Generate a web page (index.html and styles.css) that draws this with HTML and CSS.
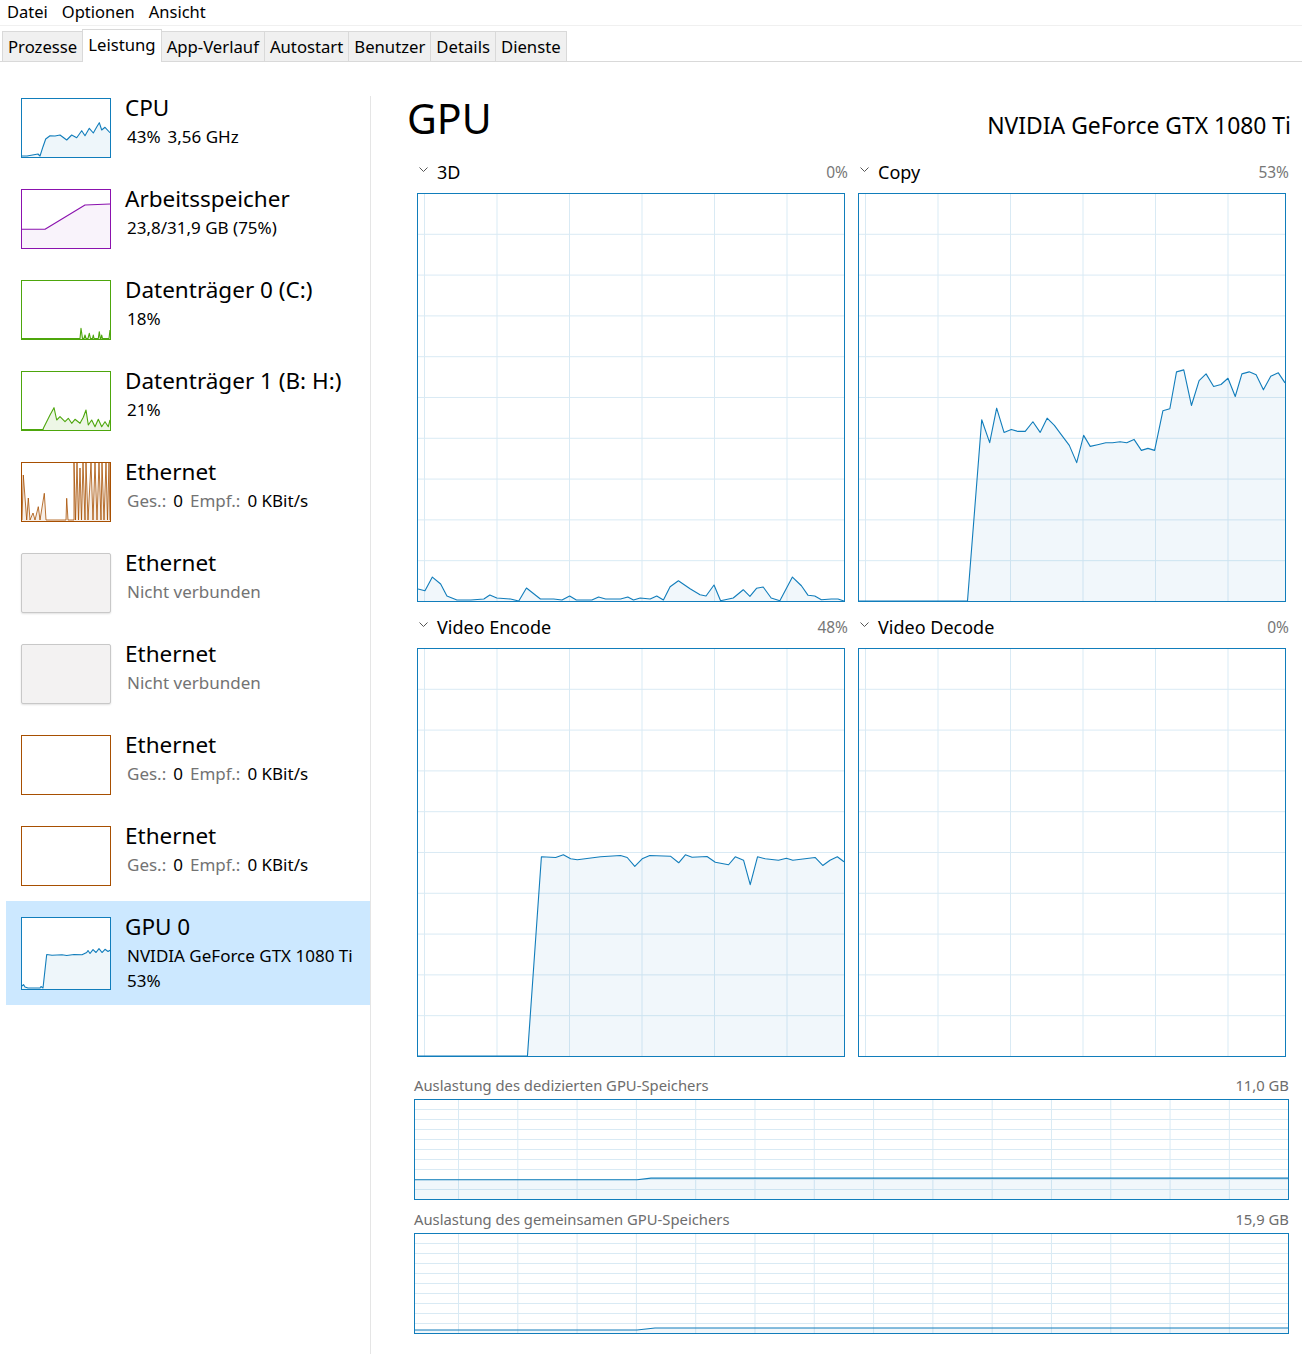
FILE: index.html
```html
<!DOCTYPE html>
<html lang="de">
<head>
    <meta charset="UTF-8">
    <meta name="viewport" content="width=device-width, initial-scale=1.0">
    <link rel="stylesheet" href="styles.css">
    <title>Task-Manager</title>
</head>
<body>

    <div class="menubar">
        <span>Datei</span>
        <span>Optionen</span>
        <span>Ansicht</span>
    </div>

    <div class="tabs">
        <div class="tab">Prozesse</div>
        <div class="tab active">Leistung</div>
        <div class="tab">App-Verlauf</div>
        <div class="tab">Autostart</div>
        <div class="tab">Benutzer</div>
        <div class="tab">Details</div>
        <div class="tab">Dienste</div>
    </div>

    <div class="main">
        <div class="sidebar">
            <div class="list">

                <div class="item">
                    <div class="thumb cpu">
                        <svg viewBox="0 0 88 58" preserveAspectRatio="none">
                            <polygon class="fill" points="0,57 5,57 16,55 18,57 21,47.7 23.7,40 28,36.7 33,37 38,36 44.7,41 49.7,36 54.7,38.7 59.7,31.7 63,36.7 67.3,29.3 71.3,34 74.7,28 77.3,23.7 79.7,31 83,28.3 88,33.7 88,58 0,58"/>
                            <polyline class="line" points="0,57 5,57 16,55 18,57 21,47.7 23.7,40 28,36.7 33,37 38,36 44.7,41 49.7,36 54.7,38.7 59.7,31.7 63,36.7 67.3,29.3 71.3,34 74.7,28 77.3,23.7 79.7,31 83,28.3 88,33.7"/>
                        </svg>
                    </div>
                    <div class="info">
                        <div class="name">CPU</div>
                        <div class="sub"><span>43%</span><span>3,56 GHz</span></div>
                    </div>
                </div>

                <div class="item">
                    <div class="thumb mem-t">
                        <svg viewBox="0 0 88 58" preserveAspectRatio="none">
                            <polygon class="fill" points="0,39.3 23,39.3 63,15 88,14 88,58 0,58"/>
                            <polyline class="line" points="0,39.3 23,39.3 63,15 88,14"/>
                        </svg>
                    </div>
                    <div class="info">
                        <div class="name">Arbeitsspeicher</div>
                        <div class="sub"><span>23,8/31,9 GB (75%)</span></div>
                    </div>
                </div>

                <div class="item">
                    <div class="thumb disk">
                        <svg viewBox="0 0 88 58" preserveAspectRatio="none">
                            <polygon class="fill" points="0,57.5 58,57.5 59,47.3 60.5,57.5 62,57.5 63,54 64,57.5 66,57.5 67.3,52.3 68.5,57.5 70.5,57.5 71.3,54 72,57.5 76.3,57.5 77.3,50.7 78.3,57.5 79,57.5 79.7,54 80.5,57.5 87,57.5 88,49 88,58 0,58"/>
                            <polyline class="line" points="0,57.5 58,57.5 59,47.3 60.5,57.5 62,57.5 63,54 64,57.5 66,57.5 67.3,52.3 68.5,57.5 70.5,57.5 71.3,54 72,57.5 76.3,57.5 77.3,50.7 78.3,57.5 79,57.5 79.7,54 80.5,57.5 87,57.5 88,49"/>
                        </svg>
                    </div>
                    <div class="info">
                        <div class="name">Datenträger 0 (C:)</div>
                        <div class="sub"><span>18%</span></div>
                    </div>
                </div>

                <div class="item">
                    <div class="thumb disk">
                        <svg viewBox="0 0 88 58" preserveAspectRatio="none">
                            <polygon class="fill" points="0,57.5 21,57.5 21.5,56 28,43 32,35.7 34.7,48 38,44.7 43,49.7 46.3,46.3 49.7,51.3 53,47.3 58,51.3 61.3,45.3 64,38 66.3,53 69.7,48 73,54.7 76.3,47.3 79.7,54.7 83,49.7 86.3,54.7 88,48 88,58 0,58"/>
                            <polyline class="line" points="0,57.5 21,57.5 21.5,56 28,43 32,35.7 34.7,48 38,44.7 43,49.7 46.3,46.3 49.7,51.3 53,47.3 58,51.3 61.3,45.3 64,38 66.3,53 69.7,48 73,54.7 76.3,47.3 79.7,54.7 83,49.7 86.3,54.7 88,48"/>
                        </svg>
                    </div>
                    <div class="info">
                        <div class="name">Datenträger 1 (B: H:)</div>
                        <div class="sub"><span>21%</span></div>
                    </div>
                </div>

                <div class="item">
                    <div class="thumb eth">
                        <svg viewBox="0 0 88 58" preserveAspectRatio="none">
                            <polygon class="fill" points="0,57 1.3,12 4.7,57 6.3,35 8,57 11,50 13,57 16.3,43.7 18,57 22.3,30.3 24,57 44,57 44.7,35.3 46,57 52,57 52,0 53.5,57 55,0 56.5,57 58,5 59.5,57 61,0 63,57 64,0 66,57 69,0 71,57 73,0 75,57 77,0 79,57 80,0 82,57 84,0 85.5,57 87,0 88,57 88,58 0,58"/>
                            <polyline class="line thin" points="0,57 1.3,12 4.7,57 6.3,35 8,57 11,50 13,57 16.3,43.7 18,57 22.3,30.3 24,57 44,57 44.7,35.3 46,57 52,57 52,0 53.5,57 55,0 56.5,57 58,5 59.5,57 61,0 63,57 64,0 66,57 69,0 71,57 73,0 75,57 77,0 79,57 80,0 82,57 84,0 85.5,57 87,0 88,57"/>
                        </svg>
                    </div>
                    <div class="info">
                        <div class="name">Ethernet</div>
                        <div class="sub"><span class="key">Ges.:</span><span>0</span><span class="key">Empf.:</span><span>0 KBit/s</span></div>
                    </div>
                </div>

                <div class="item">
                    <div class="thumb off"></div>
                    <div class="info">
                        <div class="name">Ethernet</div>
                        <div class="sub"><span class="key">Nicht verbunden</span></div>
                    </div>
                </div>

                <div class="item">
                    <div class="thumb off"></div>
                    <div class="info">
                        <div class="name">Ethernet</div>
                        <div class="sub"><span class="key">Nicht verbunden</span></div>
                    </div>
                </div>

                <div class="item">
                    <div class="thumb eth"></div>
                    <div class="info">
                        <div class="name">Ethernet</div>
                        <div class="sub"><span class="key">Ges.:</span><span>0</span><span class="key">Empf.:</span><span>0 KBit/s</span></div>
                    </div>
                </div>

                <div class="item">
                    <div class="thumb eth"></div>
                    <div class="info">
                        <div class="name">Ethernet</div>
                        <div class="sub"><span class="key">Ges.:</span><span>0</span><span class="key">Empf.:</span><span>0 KBit/s</span></div>
                    </div>
                </div>

                <div class="item selected">
                    <div class="thumb cpu tall">
                        <svg viewBox="0 0 88 72" preserveAspectRatio="none">
                            <polygon class="fill" points="0,69 1.5,67.5 3,70 6,71 18,71 19,69.5 21,71 24.7,37 30,37.7 40,37.3 44.7,38 52,37 60,37.3 64.7,35 66,33 68,36 71,32 74,35 77,31 80,35 83,31.7 86,34 88,32.7 88,72 0,72"/>
                            <polyline class="line" points="0,69 1.5,67.5 3,70 6,71 18,71 19,69.5 21,71 24.7,37 30,37.7 40,37.3 44.7,38 52,37 60,37.3 64.7,35 66,33 68,36 71,32 74,35 77,31 80,35 83,31.7 86,34 88,32.7"/>
                        </svg>
                    </div>
                    <div class="info">
                        <div class="name">GPU 0</div>
                        <div class="sub"><span>NVIDIA GeForce GTX 1080 Ti</span></div>
                        <div class="sub"><span>53%</span></div>
                    </div>
                </div>

            </div>
        </div>

        <div class="panel">
            <div class="head">
                <h1>GPU</h1>
                <div class="model">NVIDIA GeForce GTX 1080 Ti</div>
            </div>

            <div class="engines">
                <div class="engine">
                    <div class="eng-label">
                        <svg class="chev" viewBox="0 0 9 5"><path d="M0.5 0.5 L4.5 4.5 L8.5 0.5"/></svg>
                        <span>3D</span>
                        <span class="pct">0%</span>
                    </div>
                    <div class="chart">
                        <svg viewBox="0 0 427 408" preserveAspectRatio="none">
                            <polygon class="fill" points="0,396 7,397.7 14.4,384 22.7,391 29,403 39,407 53,407 66,406 72,402 79,405 92.7,406 101,408 108.7,395 122.7,406 136,406 144.3,407 152,403 158.7,407 174.3,407 181,404 188,406 203,406 210.3,404 216,407 222.7,405 232.7,406 239.3,403 246,407 252.7,393.7 261,387.7 272.7,395.7 282.7,401.7 288.7,403 296.7,392 303.3,407.7 316,405 326,396.7 332.7,403.3 339.3,395.3 346,394 354,405 362.7,407.7 375.3,384 384.3,392.7 391,402.3 397.7,403 404.3,406.7 414.3,406 421,406 427,408 0,408"/>
                            <polyline class="line" points="0,396 7,397.7 14.4,384 22.7,391 29,403 39,407 53,407 66,406 72,402 79,405 92.7,406 101,408 108.7,395 122.7,406 136,406 144.3,407 152,403 158.7,407 174.3,407 181,404 188,406 203,406 210.3,404 216,407 222.7,405 232.7,406 239.3,403 246,407 252.7,393.7 261,387.7 272.7,395.7 282.7,401.7 288.7,403 296.7,392 303.3,407.7 316,405 326,396.7 332.7,403.3 339.3,395.3 346,394 354,405 362.7,407.7 375.3,384 384.3,392.7 391,402.3 397.7,403 404.3,406.7 414.3,406 421,406 427,408"/>
                        </svg>
                    </div>
                </div>

                <div class="engine">
                    <div class="eng-label">
                        <svg class="chev" viewBox="0 0 9 5"><path d="M0.5 0.5 L4.5 4.5 L8.5 0.5"/></svg>
                        <span>Copy</span>
                        <span class="pct">53%</span>
                    </div>
                    <div class="chart">
                        <svg viewBox="0 0 428 408" preserveAspectRatio="none">
                            <polygon class="fill" points="0,408 109,408 123.3,226.3 131.3,249.3 138.3,214.7 145.7,239 153,236 159.7,238 167,238 174.7,228.3 182,239 189,224.7 196.3,232 203,241 211.3,252 218.7,269.3 225.7,242 232.3,253 239.7,251.3 248,249.3 254.7,249.3 262.3,248.3 269,249.3 276.3,246 283.7,257 290.3,255 297,257 305.3,217.3 312.3,215.3 319,178.3 326.3,176.3 334,212 341.7,187 348.7,180.3 356.3,193 363.7,191 370.7,184.7 378,203 384.7,180.3 392,178.3 399,181.3 406.3,196.3 413.7,182.7 421.3,179.3 428,189.3 428,408"/>
                            <polyline class="line" points="0,408 109,408 123.3,226.3 131.3,249.3 138.3,214.7 145.7,239 153,236 159.7,238 167,238 174.7,228.3 182,239 189,224.7 196.3,232 203,241 211.3,252 218.7,269.3 225.7,242 232.3,253 239.7,251.3 248,249.3 254.7,249.3 262.3,248.3 269,249.3 276.3,246 283.7,257 290.3,255 297,257 305.3,217.3 312.3,215.3 319,178.3 326.3,176.3 334,212 341.7,187 348.7,180.3 356.3,193 363.7,191 370.7,184.7 378,203 384.7,180.3 392,178.3 399,181.3 406.3,196.3 413.7,182.7 421.3,179.3 428,189.3"/>
                        </svg>
                    </div>
                </div>

                <div class="engine">
                    <div class="eng-label">
                        <svg class="chev" viewBox="0 0 9 5"><path d="M0.5 0.5 L4.5 4.5 L8.5 0.5"/></svg>
                        <span>Video Encode</span>
                        <span class="pct">48%</span>
                    </div>
                    <div class="chart">
                        <svg viewBox="0 0 427 408" preserveAspectRatio="none">
                            <polygon class="fill" points="0,408 109.7,408 123.7,208.3 138,209 145.7,206.3 153,210.3 159.7,211.3 183,208.3 203,207 209.7,209 217.3,218 224.7,210.3 232.3,207 253,207.7 261.3,214.3 268,206.3 274.7,208.7 289.7,208 298,213.7 311.3,216.3 318,208.3 326.3,211.7 333,236.3 340.3,208.3 348,210.3 361.3,211.7 369.3,209.7 375.7,211.7 398,209 405.7,217 413,211.7 420.3,208.3 427,213.3 427,408"/>
                            <polyline class="line" points="0,408 109.7,408 123.7,208.3 138,209 145.7,206.3 153,210.3 159.7,211.3 183,208.3 203,207 209.7,209 217.3,218 224.7,210.3 232.3,207 253,207.7 261.3,214.3 268,206.3 274.7,208.7 289.7,208 298,213.7 311.3,216.3 318,208.3 326.3,211.7 333,236.3 340.3,208.3 348,210.3 361.3,211.7 369.3,209.7 375.7,211.7 398,209 405.7,217 413,211.7 420.3,208.3 427,213.3"/>
                        </svg>
                    </div>
                </div>

                <div class="engine">
                    <div class="eng-label">
                        <svg class="chev" viewBox="0 0 9 5"><path d="M0.5 0.5 L4.5 4.5 L8.5 0.5"/></svg>
                        <span>Video Decode</span>
                        <span class="pct">0%</span>
                    </div>
                    <div class="chart"></div>
                </div>
            </div>

            <div class="mem">
                <div class="mem-label">
                    <span>Auslastung des dedizierten GPU-Speichers</span>
                    <span>11,0 GB</span>
                </div>
                <div class="mem-chart">
                    <svg viewBox="0 0 873 98" preserveAspectRatio="none">
                        <polygon class="fill" points="0,79 222,79 236,77.3 873,77.3 873,98 0,98"/>
                        <polyline class="line" points="0,79 222,79 236,77.3 873,77.3"/>
                    </svg>
                </div>

                <div class="mem-label">
                    <span>Auslastung des gemeinsamen GPU-Speichers</span>
                    <span>15,9 GB</span>
                </div>
                <div class="mem-chart">
                    <svg viewBox="0 0 873 98" preserveAspectRatio="none">
                        <polygon class="fill" points="0,95 222,95 240,93 873,93 873,98 0,98"/>
                        <polyline class="line" points="0,95 222,95 240,93 873,93"/>
                    </svg>
                </div>
            </div>
        </div>
    </div>

</body>
</html>
```

FILE: styles.css
```css
body {
    margin: 0;
    width: 1302px;
    height: 1354px;
    overflow: hidden;
    font-family: "Noto Sans", "Liberation Sans", sans-serif;
    color: #000;
    background-color: #fff;
}

/* menu + tabs */

.menubar {
    display: flex;
    height: 25px;
    border-bottom: 1px solid #f0f0f0;
    font-size: 16.5px;
    line-height: 24px;
}

.menubar span {
    padding: 0 7px;
}

.tabs {
    display: flex;
    align-items: flex-end;
    height: 35px;
    padding-left: 3px;
    border-bottom: 1px solid #d9d9d9;
    font-size: 16.7px;
}

.tab {
    height: 30px;
    box-sizing: border-box;
    margin-left: -1px;
    padding: 0 5px;
    border: 1px solid #d9d9d9;
    border-bottom: none;
    background-color: #f0f0f0;
    line-height: 29px;
    white-space: nowrap;
}

.tab.active {
    height: 33px;
    margin-bottom: -1px;
    background-color: #fff;
}

/* layout */

.main {
    display: flex;
    height: 1292px;
    box-sizing: border-box;
    padding-top: 20px;
}

.sidebar {
    width: 370px;
    flex: none;
    margin-top: 14px;
    border-right: 1px solid #e5e5e5;
}

.list {
    margin-top: -14px;
    padding-left: 6px;
}

.item {
    display: flex;
    padding: 16px 0 15px 15px;
}

.item.selected {
    background-color: #cce8ff;
}

.thumb {
    width: 90px;
    height: 60px;
    flex: none;
    box-sizing: border-box;
    border: 1px solid #117dbb;
    background-color: #fff;
}

.thumb svg {
    display: block;
    width: 100%;
    height: 100%;
}

.thumb.tall {
    height: 73px;
}

.thumb.cpu { border-color: #117dbb; }
.thumb.cpu .line { stroke: #117dbb; }
.thumb.cpu .fill { fill: rgba(17, 125, 187, 0.07); }

.thumb.mem-t { border-color: #8b12ae; }
.thumb.mem-t .line { stroke: #8b12ae; }
.thumb.mem-t .fill { fill: rgba(139, 18, 174, 0.05); }

.thumb.disk { border-color: #4da60c; }
.thumb.disk .line { stroke: #4da60c; }
.thumb.disk .fill { fill: rgba(77, 166, 12, 0.1); }

.thumb.eth { border-color: #a74f01; }
.thumb.eth .line { stroke: #a74f01; }
.thumb.eth .fill { fill: rgba(167, 79, 1, 0.09); }

.thumb.off {
    border-color: #c8c8c8;
    border-radius: 2px;
    background-color: #f3f2f2;
    box-shadow: 0 1px 2px rgba(0, 0, 0, 0.12);
}

.line {
    fill: none;
    stroke: #117dbb;
    stroke-width: 1.1;
    vector-effect: non-scaling-stroke;
    stroke-linejoin: round;
}

.line.thin {
    stroke-width: 0.8;
}

.fill {
    fill: rgba(17, 125, 187, 0.06);
}

.info {
    margin-left: 14px;
    margin-bottom: -4px;
    white-space: nowrap;
}

.name {
    font-size: 22.5px;
    line-height: 19px;
    margin-bottom: 7px;
}

.sub {
    display: flex;
    gap: 7px;
    padding-left: 2px;
    font-size: 17px;
    line-height: 25px;
}

.sub .key {
    color: #737373;
}

/* right panel */

.panel {
    flex: 1;
    padding: 12px 13px 0 45px;
}

.head {
    display: flex;
    justify-content: space-between;
    align-items: baseline;
    height: 48px;
    margin: 0 -2px 0 -9px;
}

.head h1 {
    margin: 0;
    font-size: 41px;
    font-weight: normal;
    line-height: 48px;
}

.model {
    font-size: 22.9px;
}

.engines {
    display: grid;
    grid-template-columns: 432px 432px;
    column-gap: 9px;
    row-gap: 13px;
    margin-top: 18px;
}

.eng-label {
    display: flex;
    align-items: center;
    height: 24px;
    margin-bottom: 9px;
    padding-left: 3px;
    font-size: 18px;
}

.chev {
    width: 9px;
    height: 5px;
    margin-right: 9px;
    margin-top: -5px;
    fill: none;
    stroke: #555;
    stroke-width: 1;
}

.pct {
    margin-left: auto;
    font-size: 15.5px;
    color: #777;
}

.chart {
    height: 409px;
    box-sizing: border-box;
    margin: 0 3px 0 1px;
    border: 1px solid #117dbb;
    background-image:
        linear-gradient(to right, #d9eaf4 1px, transparent 1px),
        linear-gradient(to bottom, #d9eaf4 1px, transparent 1px);
    background-size: 72.5px 40.8px;
    background-position: 6px -1px;
}

.chart svg,
.mem-chart svg {
    display: block;
    width: 100%;
    height: 100%;
}

.mem {
    margin-left: -2px;
    width: 875px;
}

.mem-label {
    display: flex;
    justify-content: space-between;
    margin-top: 18px;
    margin-bottom: 4px;
    font-size: 14.8px;
    line-height: 20px;
    color: #6d6d6d;
}

.mem-label + .mem-chart + .mem-label {
    margin-top: 9px;
}

.mem-chart {
    height: 101px;
    box-sizing: border-box;
    border: 1px solid #117dbb;
    background-image:
        linear-gradient(to right, #d9eaf4 1px, transparent 1px),
        linear-gradient(to bottom, #d9eaf4 1px, transparent 1px);
    background-size: 59.3px 10px;
    background-position: 43px -1px;
}
```
